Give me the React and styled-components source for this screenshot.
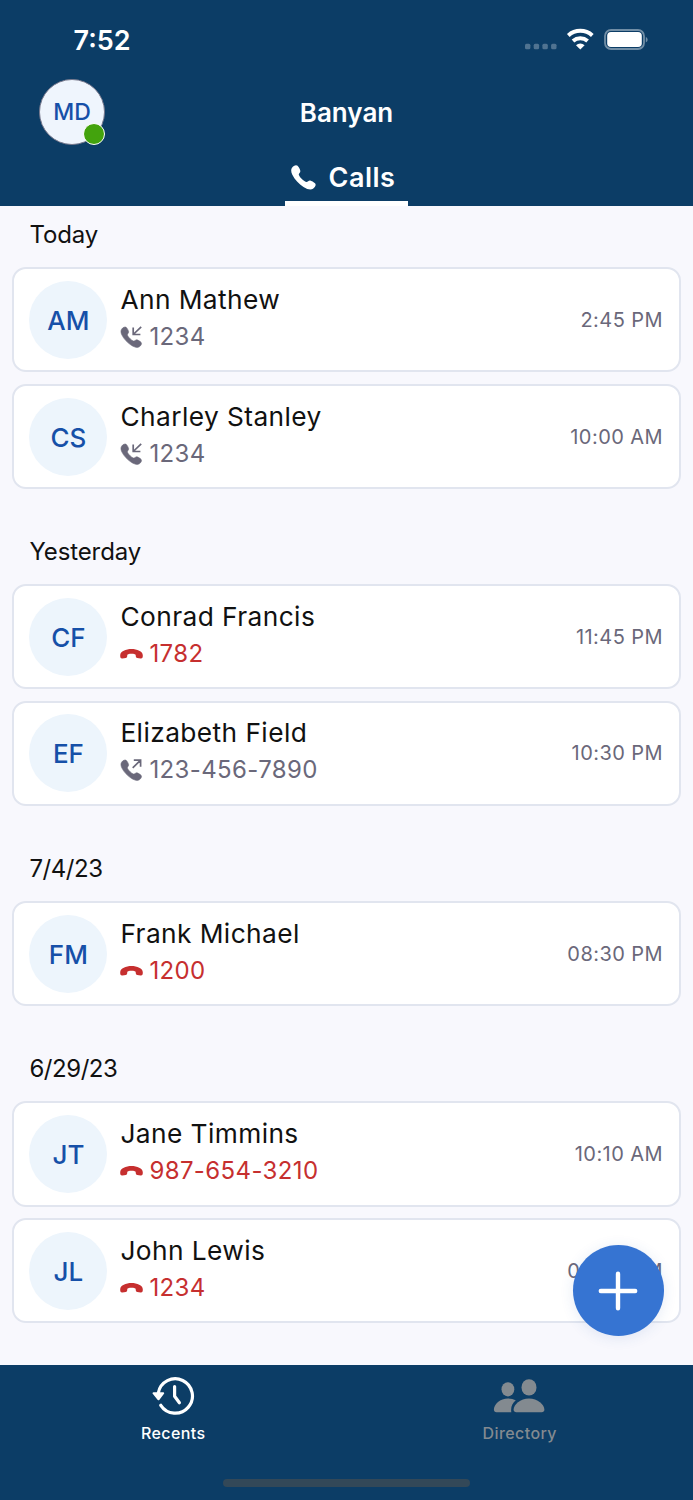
import React from 'react';
import styled, { createGlobalStyle } from 'styled-components';

const GlobalStyle = createGlobalStyle`
  * {
    box-sizing: border-box;
  }

  body {
    margin: 0;
    background: #f8f8fd;
    font-family: Inter, 'Liberation Sans', sans-serif;
  }
`;

const Screen = styled.div`
  display: flex;
  flex-direction: column;
  width: 693px;
  height: 1500px;
  overflow: hidden;
  background: #f8f8fd;
  position: relative;
`;

const Header = styled.header`
  flex: none;
  height: 206px;
  background: #0c3d66;
  color: #fff;
`;

const StatusBar = styled.div`
  display: flex;
  align-items: center;
  justify-content: space-between;
  height: 79px;
  padding: 0 44px 0 73.5px;
`;

const Clock = styled.span`
  padding-top: 1px;
  font-size: 27px;
  font-weight: 600;
`;

const StatusIcons = styled.svg`
  display: block;
  width: 125px;
  height: 24px;
`;

const TitleRow = styled.div`
  display: grid;
  grid-template-columns: 1fr auto 1fr;
  align-items: center;
  height: 66px;
  padding: 0 39px;
`;

const Profile = styled.div`
  position: relative;
  display: flex;
  align-items: center;
  justify-content: center;
  width: 66px;
  height: 66px;
  border: 1.5px solid #77788c;
  border-radius: 50%;
  background: #eff5fd;
  color: #1650a8;
  font-size: 23px;
  font-weight: 500;
`;

const Presence = styled.span`
  position: absolute;
  right: -1px;
  bottom: -1px;
  width: 22px;
  height: 22px;
  border: 1.5px solid #fff;
  border-radius: 50%;
  background: #43a30d;
`;

const Title = styled.h1`
  margin: 0;
  font-size: 26px;
  font-weight: 600;
`;

const Tab = styled.div`
  display: flex;
  align-items: center;
  justify-content: flex-start;
  gap: 13px;
  width: 123px;
  height: 61px;
  margin: 0 auto;
  padding: 8px 0 0 5.5px;
  border-bottom: 5px solid #fff;
  font-size: 27px;
  font-weight: 600;
  letter-spacing: 0.5px;
`;

const List = styled.main`
  flex: 1;
  min-height: 0;
  padding: 14px 12.4px 0;
  overflow: hidden;
`;

const Section = styled.section`
  margin-bottom: 47.8px;
`;

const SectionTitle = styled.h2`
  margin: 0 0 17.2px;
  padding-left: 17px;
  font-size: 24px;
  font-weight: 400;
  line-height: 30px;
  letter-spacing: ${props => (props.$date ? '-0.45px' : '-0.1px')};
  color: #111;
`;

const Card = styled.div`
  display: flex;
  align-items: center;
  height: 105.3px;
  margin-bottom: 11.4px;
  padding: 0 15.5px 0 15px;
  border: 2px solid #e1e5ef;
  border-radius: 14px;
  background: #fff;

  &:last-child {
    margin-bottom: 0;
  }
`;

const Avatar = styled.div`
  display: flex;
  flex: none;
  align-items: center;
  justify-content: center;
  width: 78px;
  height: 78px;
  padding-top: 1px;
  border-radius: 50%;
  background: #edf5fc;
  color: #1650a8;
  font-size: 26px;
  font-weight: 500;
`;

const Details = styled.div`
  flex: 1;
  padding-left: 13px;
`;

const Name = styled.div`
  margin-top: -2px;
  font-size: 26.3px;
  line-height: 36px;
  letter-spacing: 0.42px;
  color: #111;
`;

const Number = styled.div`
  display: flex;
  align-items: center;
  gap: 6px;
  font-size: 24px;
  line-height: 38px;
  letter-spacing: 0.38px;
  color: ${props => (props.$missed ? '#c62f2f' : '#6a687a')};
`;

const Time = styled.time`
  font-size: 20px;
  letter-spacing: 0.45px;
  color: #6a687a;
`;

const AddButton = styled.button`
  position: absolute;
  left: 572.7px;
  top: 1245.2px;
  display: flex;
  align-items: center;
  justify-content: center;
  width: 91px;
  height: 91px;
  padding: 0;
  border: 0;
  border-radius: 50%;
  background: #3674d2;
  box-shadow: 0 2px 14px rgba(40, 90, 170, 0.12);
`;

const Footer = styled.footer`
  display: flex;
  flex: none;
  flex-direction: column;
  align-items: center;
  justify-content: space-between;
  height: 135px;
  padding-bottom: 13px;
  background: #0c3d66;
`;

const NavTabs = styled.nav`
  display: grid;
  grid-template-columns: 1fr 1fr;
  width: 100%;
`;

const NavItem = styled.div`
  display: flex;
  flex-direction: column;
  align-items: center;
  padding-top: 10px;
  color: ${props => (props.$active ? '#fff' : '#838a90')};
  font-size: 16px;
  font-weight: 500;
  line-height: 20px;
  letter-spacing: 0.4px;

  svg {
    margin: 0 1px 5.5px 0;
  }
`;

const HomeBar = styled.div`
  width: 247px;
  height: 8px;
  border-radius: 4px;
  background: #334858;
`;

const handset =
  'M1 2.8C2.4.8 5-.6 6.6.8C8 2.2 9 4.5 9.3 5.8C9.6 7.4 7.6 8.3 7.8 9.8C8.8 12.5 12.6 16.2 15.2 17C16.8 17.2 17.6 15.2 19.2 15.5C20.5 15.8 22.8 17.1 24 18.3C25.4 19.7 24.4 22.2 22 23.8C20 25.2 16.5 24.6 12.5 22C8 19.1 3.6 14.6 1.2 9.6C0 6.8-.2 4.6 1 2.8Z';

const PhoneIcon = () => (
  <svg width="25" height="25" viewBox="0 0 25 25" fill="currentColor">
    <path d={handset} />
  </svg>
);

const arrows = {
  incoming: 'M21.2.8L13.2 8.5M13.2 1.6V8.5H20.4',
  outgoing: 'M12.7 8.8L20.6 1.2M13.8 1.2H20.6V7.8',
};

const CallIcon = ({ type }) => {
  if (type === 'missed') {
    return (
      <svg width="23" height="22" viewBox="0 0 23 22" fill="currentColor">
        <path d="M.2 12.2C.3 8.3 6 6 11.5 6S22.7 8.3 22.8 12.2C22.9 14.5 22.3 15.7 20.6 15.5L17.3 15C16.1 14.8 15.8 14.2 15.8 13.1C15.8 11.9 15.6 11.5 14.8 11.2C12.8 10.6 10.2 10.6 8.2 11.2C7.4 11.5 7.2 11.9 7.2 13.1C7.2 14.2 6.9 14.8 5.7 15L2.4 15.5C.7 15.7.1 14.5.2 12.2Z" />
      </svg>
    );
  }
  return (
    <svg width="23" height="22" viewBox="0 0 23 22" fill="currentColor">
      <path d={handset} transform="translate(.8 .8) scale(.84)" stroke="currentColor" strokeWidth=".7" />
      <path d={arrows[type]} fill="none" stroke="currentColor" strokeWidth="1.7" />
    </svg>
  );
};

const RecentsIcon = () => (
  <svg width="44" height="42" viewBox="0 0 44 42" fill="none" stroke="#fff" strokeWidth="3.2" strokeLinecap="round" strokeLinejoin="round">
    <path d="M7.3 18A17.2 17.2 0 1 1 9.8 30.3" />
    <path d="M23.6 11.5V21.2L28.4 27.8" />
    <path d="M2.5 18.2H12.2L7.5 24.3Z" fill="#fff" strokeWidth="2" />
  </svg>
);

const DirectoryIcon = () => (
  <svg width="52" height="42" viewBox="0 0 52 42" fill="currentColor">
    <ellipse cx="14.9" cy="14.3" rx="6.4" ry="7.1" />
    <ellipse cx="36" cy="12.4" rx="7.5" ry="8.2" />
    <path d="M.9 34.6C.9 29.2 7.2 23.4 15 23.4C18.2 23.4 20.8 24.2 22.8 25.3C19.3 28.1 17.5 32.4 18.3 37.2H3.5C1.8 37.2 .9 36.3.9 34.6Z" />
    <path d="M20.6 34.7C20.6 29.4 27.3 23.4 36 23.4S51.4 29.4 51.4 34.7C51.4 36.2 50.3 37.2 48.7 37.2H23.3C21.7 37.2 20.6 36.2 20.6 34.7Z" />
  </svg>
);

const sections = [
  {
    title: 'Today',
    calls: [
      { initials: 'AM', name: 'Ann Mathew', number: '1234', type: 'incoming', time: '2:45 PM' },
      { initials: 'CS', name: 'Charley Stanley', number: '1234', type: 'incoming', time: '10:00 AM' },
    ],
  },
  {
    title: 'Yesterday',
    calls: [
      { initials: 'CF', name: 'Conrad Francis', number: '1782', type: 'missed', time: '11:45 PM' },
      { initials: 'EF', name: 'Elizabeth Field', number: '123-456-7890', type: 'outgoing', time: '10:30 PM' },
    ],
  },
  {
    title: '7/4/23',
    date: true,
    calls: [
      { initials: 'FM', name: 'Frank Michael', number: '1200', type: 'missed', time: '08:30 PM' },
    ],
  },
  {
    title: '6/29/23',
    date: true,
    calls: [
      { initials: 'JT', name: 'Jane Timmins', number: '987-654-3210', type: 'missed', time: '10:10 AM' },
      { initials: 'JL', name: 'John Lewis', number: '1234', type: 'missed', time: '08:30 PM' },
    ],
  },
];

const CallCard = ({ call }) => (
  <Card>
    <Avatar>{call.initials}</Avatar>
    <Details>
      <Name>{call.name}</Name>
      <Number $missed={call.type === 'missed'}>
        <CallIcon type={call.type} />
        {call.number}
      </Number>
    </Details>
    <Time>{call.time}</Time>
  </Card>
);

const App = () => (
  <React.Fragment>
    <GlobalStyle />
    <Screen>
      <Header>
        <StatusBar>
          <Clock>7:52</Clock>
          <StatusIcons viewBox="0 0 125 24" fill="#fff">
            <g opacity=".28">
              <rect x="1" y="15.8" width="5.4" height="5.4" rx="1.5" />
              <rect x="9.7" y="15.8" width="5.4" height="5.4" rx="1.5" />
              <rect x="18.4" y="15.8" width="5.4" height="5.4" rx="1.5" />
              <rect x="27.1" y="15.8" width="5.4" height="5.4" rx="1.5" />
            </g>
            <path d="M44.3 7.4A18 18 0 0 1 68.3 7.4M49 13A11.3 11.3 0 0 1 63.6 13" fill="none" stroke="#fff" strokeWidth="4" />
            <path d="M52 17.2A6.5 6.5 0 0 1 60.6 17.2L56.3 21.6Z" />
            <rect x="81" y="2" width="39" height="19" rx="6" fill="none" stroke="#fff" strokeOpacity=".42" strokeWidth="1.8" />
            <rect x="83.2" y="4" width="34.6" height="15" rx="3.8" />
            <path d="M121.8 8.8Q125.6 11.6 121.8 14.5Z" opacity=".42" />
          </StatusIcons>
        </StatusBar>
        <TitleRow>
          <Profile>
            MD
            <Presence />
          </Profile>
          <Title>Banyan</Title>
        </TitleRow>
        <Tab>
          <PhoneIcon />
          Calls
        </Tab>
      </Header>
      <List>
        {sections.map(section => (
          <Section key={section.title}>
            <SectionTitle $date={section.date}>{section.title}</SectionTitle>
            {section.calls.map(call => (
              <CallCard key={call.name} call={call} />
            ))}
          </Section>
        ))}
      </List>
      <Footer>
        <NavTabs>
          <NavItem $active>
            <RecentsIcon />
            Recents
          </NavItem>
          <NavItem>
            <DirectoryIcon />
            Directory
          </NavItem>
        </NavTabs>
        <HomeBar />
      </Footer>
      <AddButton aria-label="New call">
        <svg width="40" height="40" viewBox="0 0 40 40" stroke="#fff" strokeWidth="4.4" strokeLinecap="round">
          <path d="M20 2.8V37.2M2.8 20H37.2" />
        </svg>
      </AddButton>
    </Screen>
  </React.Fragment>
);

export default App;
